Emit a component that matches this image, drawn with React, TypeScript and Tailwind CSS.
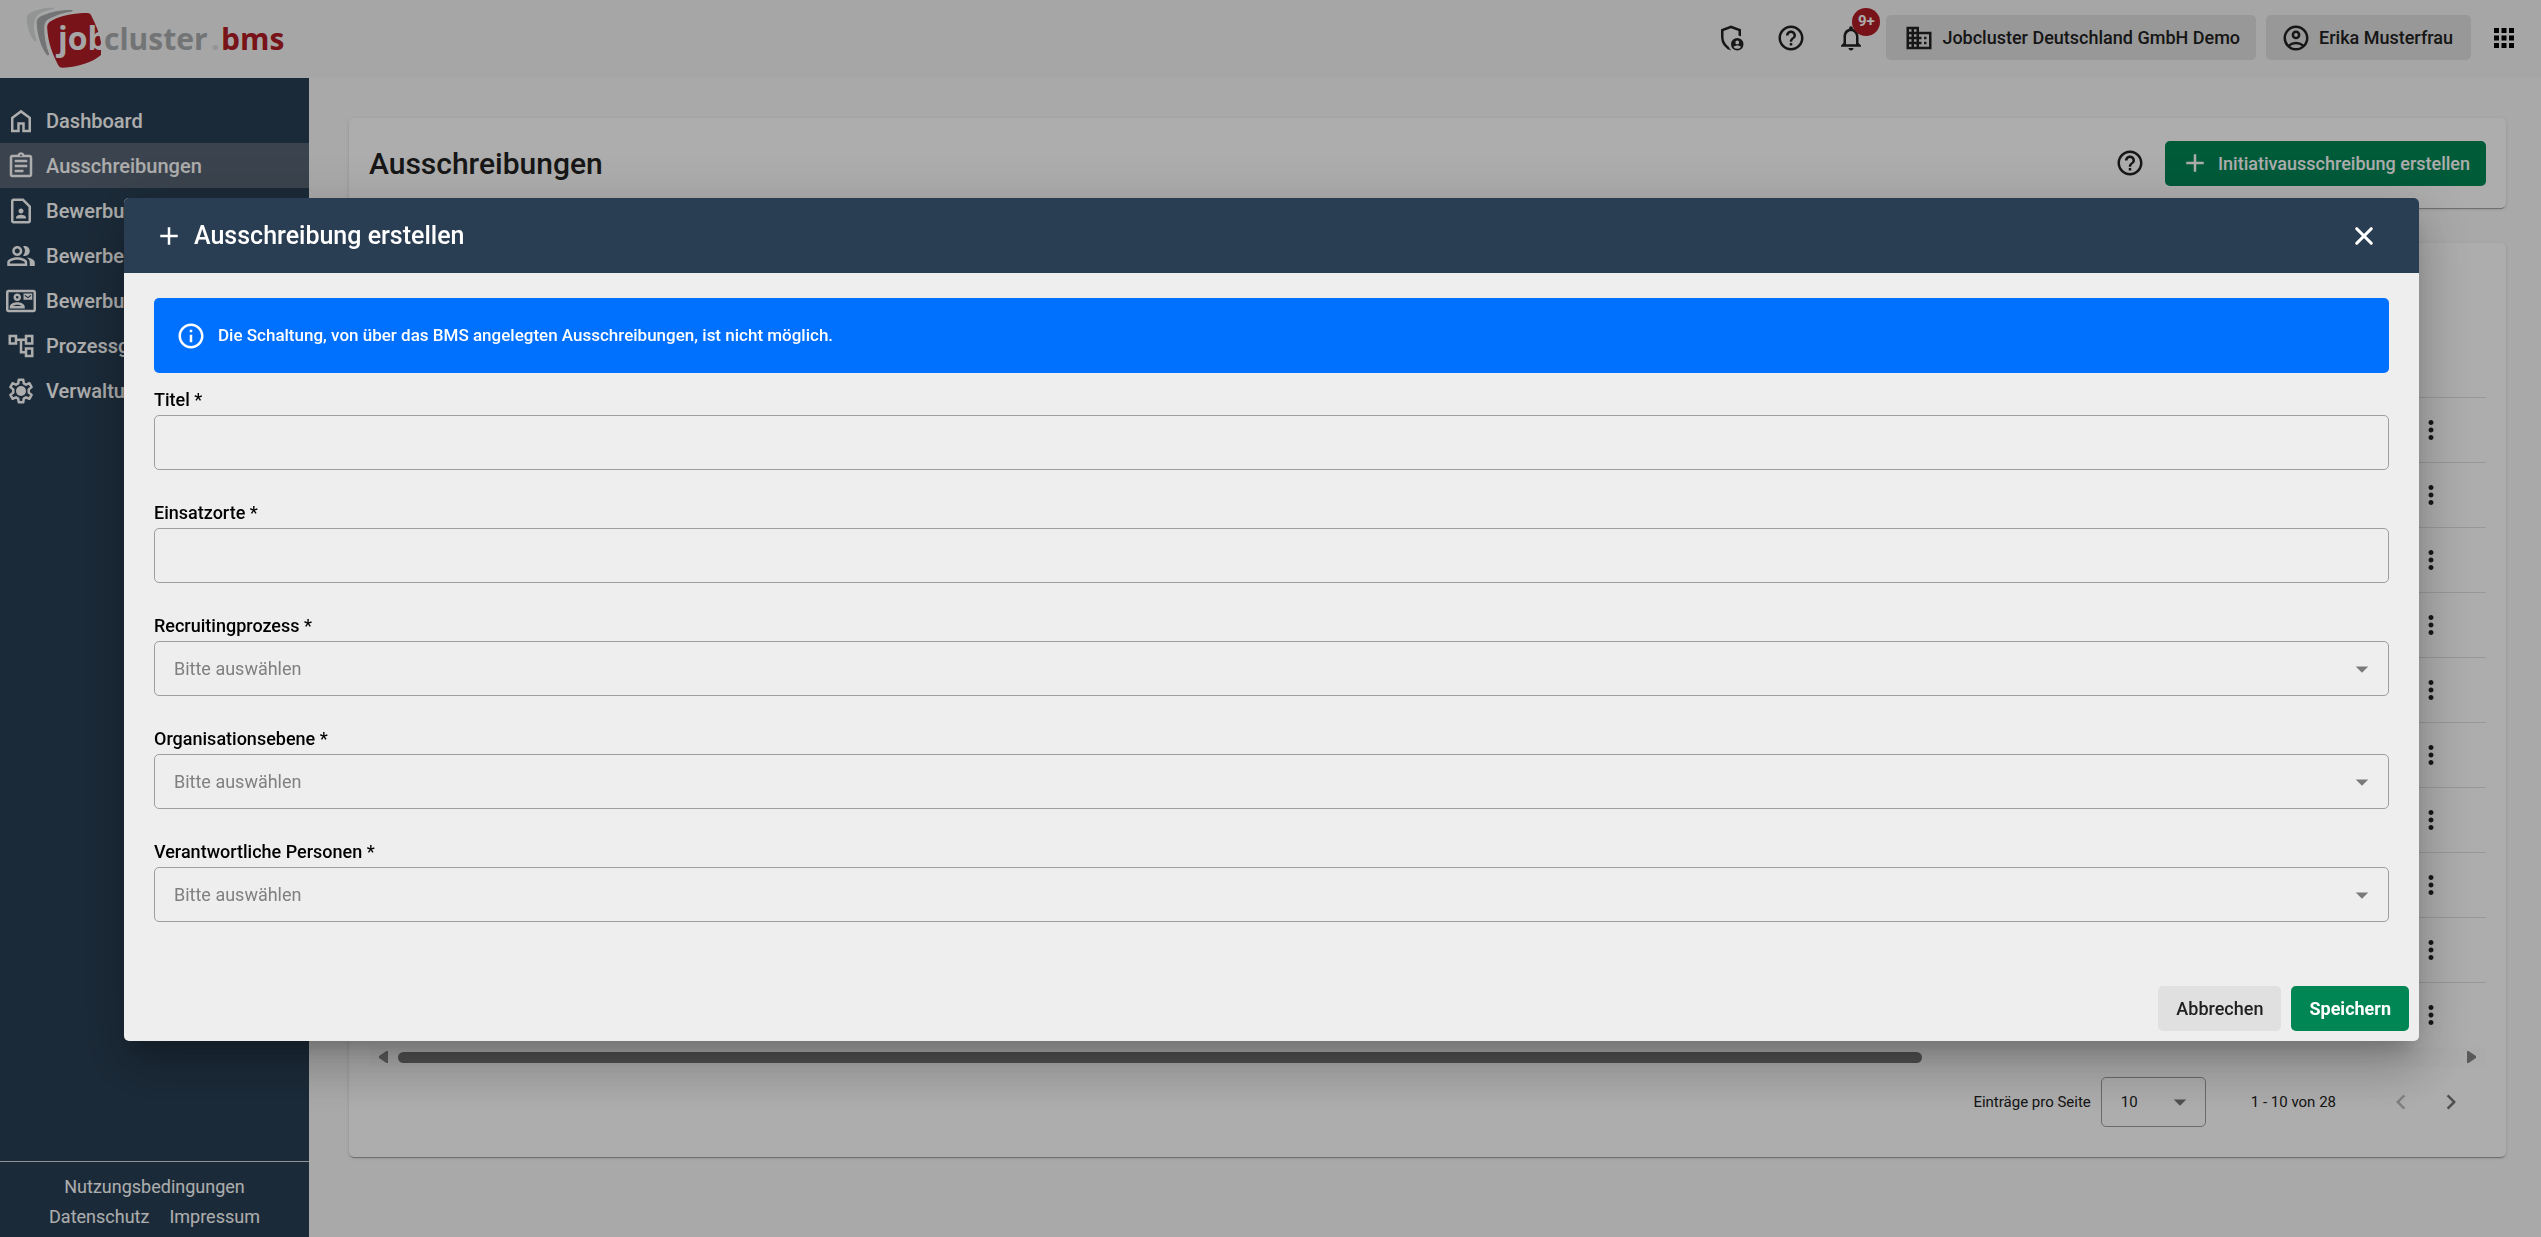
import type { ReactNode } from 'react';
import {
  MdAdd,
  MdApps,
  MdArrowDropDown,
  MdBusiness,
  MdChevronLeft,
  MdChevronRight,
  MdHelpOutline,
  MdInfoOutline,
  MdMoreVert,
  MdNotificationsNone,
  MdOutlineAccountCircle,
  MdOutlineAccountTree,
  MdOutlineAssignment,
  MdOutlineContactMail,
  MdOutlineContactPage,
  MdOutlinePeopleAlt,
} from 'react-icons/md';

const ICON = 30;

// ── Icons that the Material set draws differently ───────
function HomeIcon() {
  return (
    <svg width={ICON} height={ICON} viewBox="0 0 24 24" fill="currentColor" aria-hidden="true">
      <path d="M6 19h3v-6h6v6h3v-9l-6-4.5L6 10v9Zm-2 2V9l8-6 8 6v12h-7v-6h-2v6H4Z" />
    </svg>
  );
}

function SettingsIcon() {
  return (
    <svg width={ICON} height={ICON} viewBox="0 0 24 24" fill="none" stroke="currentColor" aria-hidden="true">
      <path
        strokeWidth="2"
        strokeLinejoin="round"
        d="M10.2 3h3.6l.4 2.9 1.8 1 2.7-1.1 1.8 3.1-2.3 1.8v2.6l2.3 1.8-1.8 3.1-2.7-1.1-1.8 1-.4 2.9h-3.6l-.4-2.9-1.8-1-2.7 1.1-1.8-3.1 2.3-1.8v-2.6L3.5 8.9l1.8-3.1 2.7 1.1 1.8-1z"
      />
      <circle cx="12" cy="12" r="4" fill="currentColor" stroke="none" />
    </svg>
  );
}

function AdminShieldIcon() {
  return (
    <svg width={ICON} height={ICON} viewBox="0 0 24 24" fill="currentColor" aria-hidden="true">
      <path d="M12 22q-3.475-.875-5.738-3.988T4 11.1V5l8-3 8 3v5.675q-.475-.2-.975-.363T18 10.075V6.4l-6-2.25L6 6.4v4.7q0 1.175.313 2.35t.875 2.238T8.55 17.65t1.775 1.5q.275.8.725 1.525t1.025 1.3z" />
      <path
        fillRule="evenodd"
        d="M17 12a5 5 0 1 1 0 10a5 5 0 0 1 0-10Zm0 2a1.5 1.5 0 1 0 0 3a1.5 1.5 0 0 0 0-3Zm0 3.95c-1.2 0-2.3.4-3 1.2a3.7 3.7 0 0 0 6 0c-.7-.8-1.8-1.2-3-1.2Z"
      />
    </svg>
  );
}

function CloseIcon() {
  return (
    <svg width={ICON} height={ICON} viewBox="0 0 24 24" fill="none" stroke="currentColor" aria-hidden="true">
      <path strokeWidth="2.5" strokeLinecap="round" d="M6.2 6.2l11.6 11.6M17.8 6.2L6.2 17.8" />
    </svg>
  );
}

function Logo() {
  return (
    <svg width="300" height="78" viewBox="0 0 300 78" role="img" aria-label="jobcluster.bms">
      <path fill="#d9dadb" d="M54 7.7C45 7.5 36 9.5 30 13c-2.5 1.5-3.5 4-3.2 7 .6 8 3.2 16 8 21.5l2-.5c-2-5-3-11-2.8-16 .3-6 2.5-10 7-12 4.5-2 9-3.5 13-4z" />
      <path fill="#a9abad" d="M72.7 10C61 9.5 49 12 40 16.7c-2.3 1.3-3.4 3.5-3.3 6.3.5 12 4 24 10.6 32.5l2-.8c-3.8-10-5.3-19-5-28 .1-4 2-6.5 5-8 7-3.8 15-6 23-7.2z" />
      <path fill="#b01c26" d="M52 20.5C62 15 75 13 87 13c2.5 0 3.7 1 4.6 3.3C96 25 99.5 33.5 101 42v13c-8 7-23 12.3-38 12.7-2.7.1-4-.9-5-3C52 53 48 42 47.2 28c-.2-4 1.6-5.8 4.8-7.5z" />
      <g fontFamily="'Open Sans', 'Noto Sans', sans-serif" fontSize="30" fontWeight="700">
        <text x="58" y="50" fill="#f5f5f5" fontSize="32">job</text>
        <text x="104" y="50" fill="#a9abad">cluster</text>
        <text x="211" y="50" fill="#d9dadb">.</text>
        <text x="221" y="50" fill="#b01c26">bms</text>
      </g>
    </svg>
  );
}

// ── Navigation ──────────────────────────────────────────
const navItems: { label: string; icon: ReactNode; active?: boolean }[] = [
  { label: 'Dashboard', icon: <HomeIcon /> },
  { label: 'Ausschreibungen', icon: <MdOutlineAssignment size={ICON} />, active: true },
  { label: 'Bewerbungen', icon: <MdOutlineContactPage size={ICON} /> },
  { label: 'Bewerber', icon: <MdOutlinePeopleAlt size={ICON} /> },
  { label: 'Bewerbungen', icon: <MdOutlineContactMail size={ICON} /> },
  { label: 'Prozessgruppen', icon: <MdOutlineAccountTree size={ICON} /> },
  { label: 'Verwaltung', icon: <SettingsIcon /> },
];

const fields: { id: string; label: string; type: 'input' | 'select' }[] = [
  { id: 'titel', label: 'Titel *', type: 'input' },
  { id: 'einsatzorte', label: 'Einsatzorte *', type: 'input' },
  { id: 'recruitingprozess', label: 'Recruitingprozess *', type: 'select' },
  { id: 'organisationsebene', label: 'Organisationsebene *', type: 'select' },
  { id: 'personen', label: 'Verantwortliche Personen *', type: 'select' },
];

const rows = Array.from({ length: 10 }, (_, i) => i);

function TopBar() {
  return (
    <header className="flex h-[78px] shrink-0 items-start justify-between bg-[#f5f5f5] pr-[22px]">
      <a href="#"><Logo /></a>
      <div className="flex items-center pt-[15px]">
        <div className="mr-5 flex items-center gap-[30px]">
          <button aria-label="Administration"><AdminShieldIcon /></button>
          <button aria-label="Hilfe"><MdHelpOutline size={ICON} /></button>
          <button aria-label="Benachrichtigungen" className="relative">
            <MdNotificationsNone size={ICON} />
            <span className="absolute -top-[15px] left-4 flex size-7 items-center justify-center rounded-full bg-[#b01c26] text-[15px] font-bold text-white">
              9+
            </span>
          </button>
        </div>
        <button className="mr-[10px] flex h-[45px] items-center gap-2 rounded-[5px] bg-[#e0e0e0] pl-[18px] pr-4 text-[18px] font-medium">
          <MdBusiness size={ICON} />
          Jobcluster Deutschland GmbH Demo
        </button>
        <button className="mr-[18px] flex h-[45px] items-center gap-2 rounded-[5px] bg-[#e0e0e0] pl-[15px] pr-[18px] text-[18px] font-medium">
          <MdOutlineAccountCircle size={ICON} />
          Erika Musterfrau
        </button>
        <button aria-label="Apps" className="text-black"><MdApps size={ICON} /></button>
      </div>
    </header>
  );
}

function Sidebar() {
  return (
    <aside className="flex w-[309px] shrink-0 flex-col justify-between bg-[#293f54] text-white">
      <nav className="pt-5">
        {navItems.map((item, i) => (
          <a
            key={i}
            href="#"
            className={`flex h-[45px] items-center gap-[10px] pl-[6px] text-[20px] font-medium ${item.active ? 'bg-[#576473]' : ''}`}
          >
            {item.icon}
            {item.label}
          </a>
        ))}
      </nav>
      <div className="flex flex-wrap justify-center gap-x-5 border-t border-white/80 px-10 pb-[5px] pt-[10px] text-[18px] leading-[30px]">
        <a href="#" className="w-full text-center">Nutzungsbedingungen</a>
        <a href="#">Datenschutz</a>
        <a href="#">Impressum</a>
      </div>
    </aside>
  );
}

const cardClass =
  'rounded-[5px] bg-white shadow-[0_3px_1px_-2px_rgba(0,0,0,0.2),0_1px_1px_0_rgba(0,0,0,0.14),0_1px_4px_0_rgba(0,0,0,0.12)]';

function PageContent() {
  return (
    <main className="flex min-w-0 flex-1 flex-col gap-[35px] pl-10 pr-[35px] pt-10">
      <section className={`flex h-[90px] items-center justify-between px-5 ${cardClass}`}>
        <h1 className="text-[30px] font-medium leading-[45px]">Ausschreibungen</h1>
        <div className="flex items-center gap-5">
          <button aria-label="Hilfe"><MdHelpOutline size={ICON} /></button>
          <button className="flex h-[45px] items-center gap-2 rounded-[5px] bg-[#008655] pl-[15px] pr-4 text-[18px] font-medium text-white">
            <MdAdd size={ICON} />
            Initiativausschreibung erstellen
          </button>
        </div>
      </section>

      <section className={`px-5 pb-[30px] ${cardClass}`}>
        <table className="w-full">
          <thead>
            <tr className="h-[154px]"><th /></tr>
          </thead>
          <tbody>
            {rows.map(row => (
              <tr key={row} className="h-[65px] border-t border-[#e0e0e0]">
                <td className="pr-10">
                  <button aria-label="Aktionen" className="ml-auto block"><MdMoreVert size={ICON} /></button>
                </td>
              </tr>
            ))}
          </tbody>
        </table>

        {/* Horizontal scroll track */}
        <div className="flex h-5 items-center gap-[10px] bg-[#fcfcfc] px-[10px]">
          <svg width="9" height="12" viewBox="0 0 9 12" fill="#858585"><path d="M9 0v12H7.5L0 7V5l7.5-5z" /></svg>
          <div className="flex-1">
            <div className="h-[11px] w-[74%] rounded-full bg-[#757575]" />
          </div>
          <svg width="9" height="12" viewBox="0 0 9 12" fill="#858585"><path d="M0 0v12h1.5L9 7V5L1.5 0z" /></svg>
        </div>

        {/* Paginator */}
        <div className="mt-[10px] flex items-center justify-end pr-5 text-[15px]">
          <label htmlFor="page-size">Einträge pro Seite</label>
          <div className="relative ml-[10px] mr-[45px] flex items-center">
            <select id="page-size" className="h-[50px] w-[105px] appearance-none rounded-[5px] border border-[#9e9e9e] px-[19px] text-[15px]">
              <option>10</option>
            </select>
            <MdArrowDropDown size={ICON} className="pointer-events-none absolute right-[11px] text-[#757575]" />
          </div>
          <span>1 - 10 von 28</span>
          <button aria-label="Vorherige Seite" className="ml-[50px] text-[#bdbdbd]"><MdChevronLeft size={ICON} /></button>
          <button aria-label="Nächste Seite" className="ml-5 text-[#757575]"><MdChevronRight size={ICON} /></button>
        </div>
      </section>
    </main>
  );
}

function CreateDialog() {
  return (
    <div className="fixed inset-0 flex items-center bg-black/32 pl-[124px] pr-[122px] pt-[2px]">
      <form
        role="dialog"
        aria-labelledby="dialog-title"
        className="flex-1 overflow-hidden rounded-[5px] bg-[#eeeeee] shadow-[0_14px_19px_-9px_rgba(0,0,0,0.2),0_30px_48px_4px_rgba(0,0,0,0.14),0_11px_58px_10px_rgba(0,0,0,0.12)]"
      >
        <div className="flex h-[75px] items-center gap-[10px] bg-[#2a3e53] pl-[30px] pr-10 text-white">
          <MdAdd size={ICON} />
          <h2 id="dialog-title" className="text-[25px] font-medium">Ausschreibung erstellen</h2>
          <button type="button" aria-label="Schließen" className="ml-auto"><CloseIcon /></button>
        </div>

        <div className="px-[30px] pt-[25px]">
          <div className="mb-3 flex h-[75px] items-center gap-3 rounded-[5px] bg-[#0070ff] px-[22px] text-[17px] font-medium text-white">
            <MdInfoOutline size={ICON} />
            Die Schaltung, von über das BMS angelegten Ausschreibungen, ist nicht möglich.
          </div>

          <div className="flex flex-col gap-7">
            {fields.map(field => (
              <div key={field.id}>
                <label htmlFor={field.id} className="block text-[18px] font-medium leading-[30px] text-black">
                  {field.label}
                </label>
                {field.type === 'input' ? (
                  <input id={field.id} type="text" className="block h-[55px] w-full rounded-[5px] border border-[#9e9e9e] px-[19px] text-[18px]" />
                ) : (
                  <div className="relative flex items-center">
                    <select
                      id={field.id}
                      className="h-[55px] w-full appearance-none rounded-[5px] border border-[#9e9e9e] px-[19px] text-[18px] text-[#808080]"
                    >
                      <option>Bitte auswählen</option>
                    </select>
                    <MdArrowDropDown size={ICON} className="pointer-events-none absolute right-3 text-[#7a7a7a]" />
                  </div>
                )}
              </div>
            ))}
          </div>
        </div>

        <div className="mt-[54px] flex justify-end gap-[10px] p-[10px] text-[18px] font-medium">
          <button type="button" className="h-[45px] rounded-[5px] bg-[#e0e0e0] px-[18px]">Abbrechen</button>
          <button type="submit" className="h-[45px] rounded-[5px] bg-[#008655] px-[18px] font-bold text-white">Speichern</button>
        </div>
      </form>
    </div>
  );
}

export default function App() {
  return (
    <div className="flex h-screen flex-col overflow-hidden bg-[#fafafa] font-['Roboto',sans-serif] text-[#212121]">
      <TopBar />
      <div className="flex min-h-0 flex-1">
        <Sidebar />
        <PageContent />
      </div>
      <CreateDialog />
    </div>
  );
}
